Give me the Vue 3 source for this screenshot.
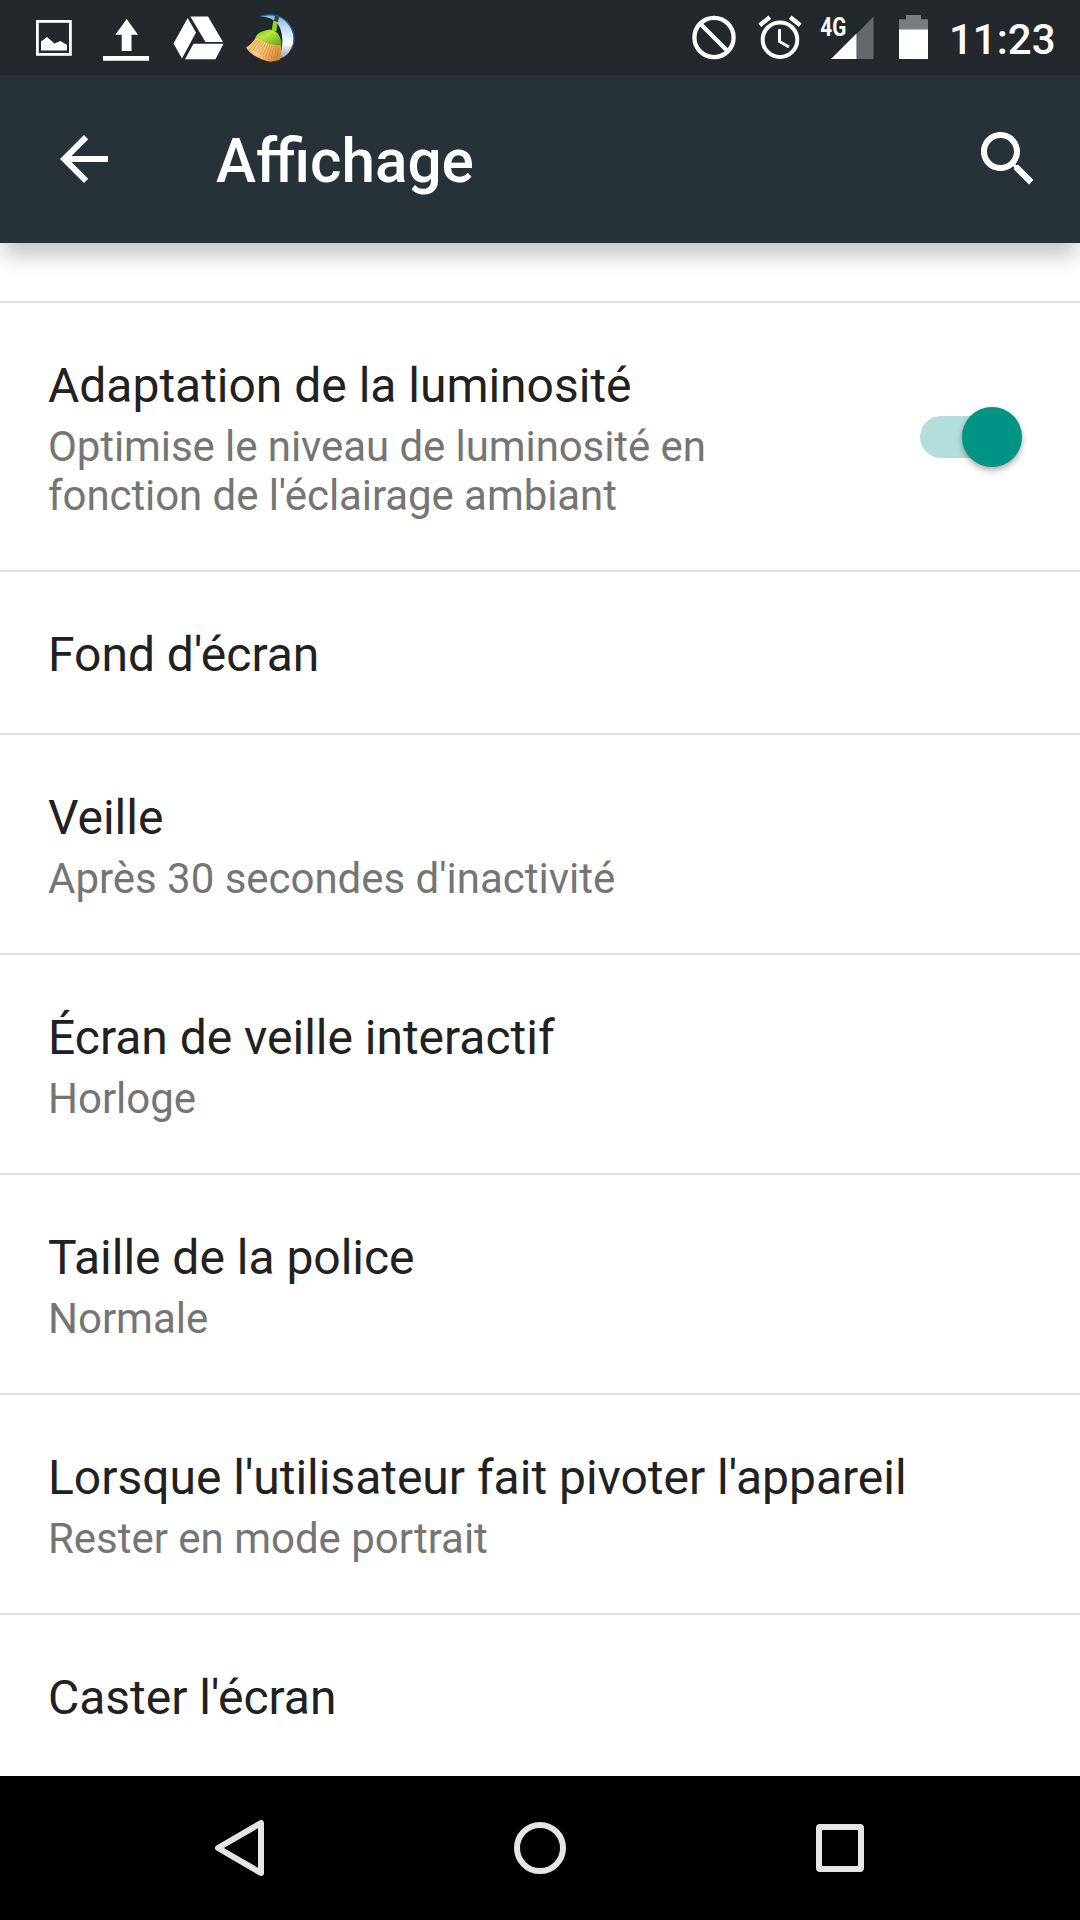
<script setup>
const rows = [
  { title: "Fond d'écran" },
  { title: 'Veille', summary: "Après 30 secondes d'inactivité" },
  { title: 'Écran de veille interactif', summary: 'Horloge' },
  { title: 'Taille de la police', summary: 'Normale' },
  { title: "Lorsque l'utilisateur fait pivoter l'appareil", summary: 'Rester en mode portrait' },
  { title: "Caster l'écran" },
]
const bristles = Array.from({ length: 11 }, (_, i) => ({
  x1: 257.5 + i * 2.1,
  y1: 40 + i * 0.7,
  x2: 249.5 + i * 2.7,
  y2: 50 + i * 1.1,
}))
</script>

<template>
  <div class="screen">
    <header class="top">
      <div class="status">
        <div class="notifications">
          <svg width="36" height="75" viewBox="36 0 36 75">
            <rect x="37.4" y="21.4" width="33" height="33" fill="none" stroke="#fff" stroke-width="2.8" />
            <path d="M41 50.5V41.5L47 37L54.5 43.5L60.5 41L67 45V50.5Z" fill="#fff" />
          </svg>
          <svg width="46" height="75" viewBox="103 0 46 75">
            <path d="M126.7 19L138 34.7H131.5V51H121.7V34.7H115.3ZM103 56H149V60.7H103Z" fill="#fff" />
          </svg>
          <svg width="51" height="75" viewBox="172.5 0 51 75">
            <path d="M187.2 18L195.5 32.5L181.5 58.5L173 43.5ZM189.8 16.5H207.5L222.5 42H205ZM193 43.7H223L215 59.3H184.5Z" fill="#fff" />
          </svg>
          <svg width="50" height="75" viewBox="245 0 50 75">
            <defs>
              <linearGradient id="moon" x1="0" y1="0" x2="0" y2="1">
                <stop offset="0" stop-color="#7fb0df" />
                <stop offset=".3" stop-color="#c4dcf4" />
                <stop offset=".65" stop-color="#fff" />
                <stop offset="1" stop-color="#8f9aa5" />
              </linearGradient>
              <linearGradient id="cap" x1="0" y1="0" x2="1" y2="1">
                <stop offset="0" stop-color="#7fc414" />
                <stop offset=".4" stop-color="#b6e640" />
                <stop offset="1" stop-color="#5f9f0c" />
              </linearGradient>
              <linearGradient id="straw" x1="0" y1="0" x2="1" y2=".6">
                <stop offset="0" stop-color="#f0ae5c" />
                <stop offset=".5" stop-color="#ffd48a" />
                <stop offset="1" stop-color="#d68a38" />
              </linearGradient>
            </defs>
            <path d="M260 16.5C268 13.5 279 14 286 21C294 29 296 41 291 49C288 54.5 284 57.5 279 59C282 50 283 43 282 36C281 25 275 17 260 16.5Z" fill="url(#moon)" />
            <path d="M260 16.5C270 13 281 15 287.5 22.5C295 31 296 42 291 49.5" fill="none" stroke="#285c96" stroke-width="1.2" />
            <path d="M256 37C253 42 250.500 45 246 47.500C250 54 261 61 271 61.800L279.500 60C281 55 281.800 50 281 45Z" fill="url(#straw)" />
            <g stroke="#c27a30" stroke-width=".6">
              <line v-for="(b, i) in bristles" :key="i" :x1="b.x1" :y1="b.y1" :x2="b.x2" :y2="b.y2" />
            </g>
            <path d="M273.5 20L277.5 21L276.500 31H271.5Z" fill="#91d51e" />
            <path d="M275 15.5L279 16.5L278 22L274 21Z" fill="#3b4144" />
            <path d="M255.5 37.500C257.500 32.500 263 30.500 270 29.500C277.500 30.500 281.500 37 281.500 45.500C272 45.500 263 42 255.5 37.500Z" fill="url(#cap)" />
          </svg>
        </div>
        <div class="system">
          <svg width="44" height="75" viewBox="692 0 44 75" fill="none" stroke="#fff" stroke-width="4.3">
            <circle cx="714" cy="37.5" r="19.6" />
            <path d="M700.5 24L727.5 51" />
          </svg>
          <svg width="44" height="75" viewBox="758 0 44 75" fill="none" stroke="#fff">
            <circle cx="780" cy="39.7" r="17.3" stroke-width="4" />
            <path d="M759.8 25.3L769.8 17.2M800.2 25.3L790.2 17.2" stroke-width="4.4" />
            <path d="M779.5 29V41.5L789 47" stroke-width="3" />
          </svg>
          <svg width="54" height="75" viewBox="820.5 0 54 75">
            <path d="M857 34V59H874V16.5Z" fill="#66696c" />
            <path d="M831.5 59L857 33.5V59Z" fill="#fff" />
            <text class="network" x="820.8" y="35.6" textLength="26" lengthAdjust="spacingAndGlyphs">4G</text>
          </svg>
          <svg width="29" height="75" viewBox="899 0 29 75">
            <path d="M906 15H921V19.3H928V30H899V19.3H906Z" fill="#7a7d80" />
            <path d="M899 29.5H928V59H899Z" fill="#fff" />
          </svg>
          <span class="clock">11:23</span>
        </div>
      </div>
      <div class="appbar">
        <svg width="72" height="72" viewBox="0 0 24 24" fill="#fff">
          <path d="M20 11H7.83l5.59-5.59L12 4l-8 8 8 8 1.41-1.41L7.83 13H20v-2z" />
        </svg>
        <h1>Affichage</h1>
        <svg width="72" height="72" viewBox="0 0 24 24" fill="#fff">
          <path d="M15.5 14h-.79l-.28-.27C15.41 12.59 16 11.11 16 9.5 16 5.91 13.09 3 9.5 3S3 5.91 3 9.5 5.91 16 9.5 16c1.61 0 3.09-.59 4.23-1.57l.27.28v.79l5 4.99L20.49 19l-4.99-5zm-6 0C7.01 14 5 11.99 5 9.5S7.01 5 9.5 5 14 7.01 14 9.5 11.99 14 9.5 14z" />
        </svg>
      </div>
    </header>
    <main>
      <div class="cut"></div>
      <section class="row adaptive">
        <div class="text">
          <h2>Adaptation de la luminosité</h2>
          <p>Optimise le niveau de luminosité en fonction de l'éclairage ambiant</p>
        </div>
        <div class="switch"><span class="thumb"></span></div>
      </section>
      <section v-for="row in rows" :key="row.title" class="row" :class="{ single: !row.summary }">
        <div class="text">
          <h2>{{ row.title }}</h2>
          <p v-if="row.summary">{{ row.summary }}</p>
        </div>
      </section>
    </main>
    <nav>
      <svg width="60" height="60" viewBox="210 1818 60 60" class="navicon">
        <path d="M218 1848L261 1823V1873Z" />
      </svg>
      <svg width="60" height="60" viewBox="510 1818 60 60" class="navicon">
        <circle cx="540" cy="1848" r="23" />
      </svg>
      <svg width="60" height="60" viewBox="810 1818 60 60" class="navicon">
        <rect x="819" y="1827" width="42" height="42" rx="1" />
      </svg>
    </nav>
  </div>
</template>

<style>
body {
  margin: 0;
}
</style>

<style scoped>
.screen {
  width: 1080px;
  height: 1920px;
  display: flex;
  flex-direction: column;
  overflow: hidden;
  background: #fff;
  font-family: Roboto, "Noto Sans", sans-serif;
}
svg {
  display: block;
  flex: none;
}
.top {
  position: relative;
  z-index: 1;
  flex: none;
  background: #263238;
  box-shadow: 0 18px 19px -4px rgba(0, 0, 0, 0.21);
}
.status {
  height: 75px;
  display: flex;
  justify-content: space-between;
  background: #22282c;
  padding: 0 25px 0 36px;
}
.notifications,
.system {
  display: flex;
}
.notifications svg:nth-child(2) {
  margin-left: 31px;
}
.notifications svg:nth-child(3) {
  margin-left: 23.5px;
}
.notifications svg:nth-child(4) {
  margin-left: 21.5px;
}
.system svg:nth-child(2) {
  margin-left: 22px;
}
.system svg:nth-child(3) {
  margin-left: 18px;
}
.system svg:nth-child(4) {
  margin-left: 25px;
}
.network {
  font: 700 25px Roboto, sans-serif;
  fill: #fff;
}
.clock {
  width: 106px;
  margin-left: 21px;
  color: #fff;
  font-size: 42px;
  font-weight: 500;
  line-height: 80px;
  white-space: nowrap;
}
.appbar {
  height: 168px;
  box-sizing: border-box;
  display: flex;
  align-items: center;
  padding: 0 36px 0 48px;
}
h1 {
  flex: 1;
  margin: 0 0 0 96px;
  color: #fff;
  font-size: 60.3px;
  font-weight: 500;
  line-height: 70px;
  padding-top: 6px;
}
main {
  flex: none;
}
.cut {
  height: 58px;
}
.row {
  height: 220px;
  box-sizing: border-box;
  display: flex;
  justify-content: space-between;
  border-top: 2px solid #e0e0e0;
  padding: 55px 48px 0;
}
.row.adaptive {
  height: 269px;
}
.row.single {
  height: 163px;
}
h2 {
  margin: 0 0 8px;
  color: #212121;
  font-size: 48px;
  font-weight: 400;
  line-height: 56px;
  letter-spacing: -0.015px;
  white-space: nowrap;
}
p {
  margin: 0;
  color: #757575;
  font-size: 42px;
  line-height: 49px;
  letter-spacing: -0.02px;
}
.adaptive .text {
  width: 700px;
}
.adaptive p {
  letter-spacing: -0.08px;
}
.switch {
  width: 92px;
  height: 42px;
  margin: 58px 20px 0 0;
  border-radius: 21px;
  background: #b2dfdb;
  display: flex;
  align-items: center;
}
.thumb {
  flex: none;
  width: 60px;
  height: 60px;
  margin: -1px 0 0 41.5px;
  border-radius: 50%;
  background: #009485;
  box-shadow: 0 4px 6px rgba(0, 0, 0, 0.28), 0 0 3px rgba(0, 0, 0, 0.15);
}
nav {
  flex: 1;
  display: flex;
  justify-content: center;
  align-items: center;
  gap: 240px;
  background: #000;
}
.navicon {
  fill: none;
  stroke: #e5e5e5;
  stroke-width: 6;
  stroke-linejoin: round;
}
</style>
